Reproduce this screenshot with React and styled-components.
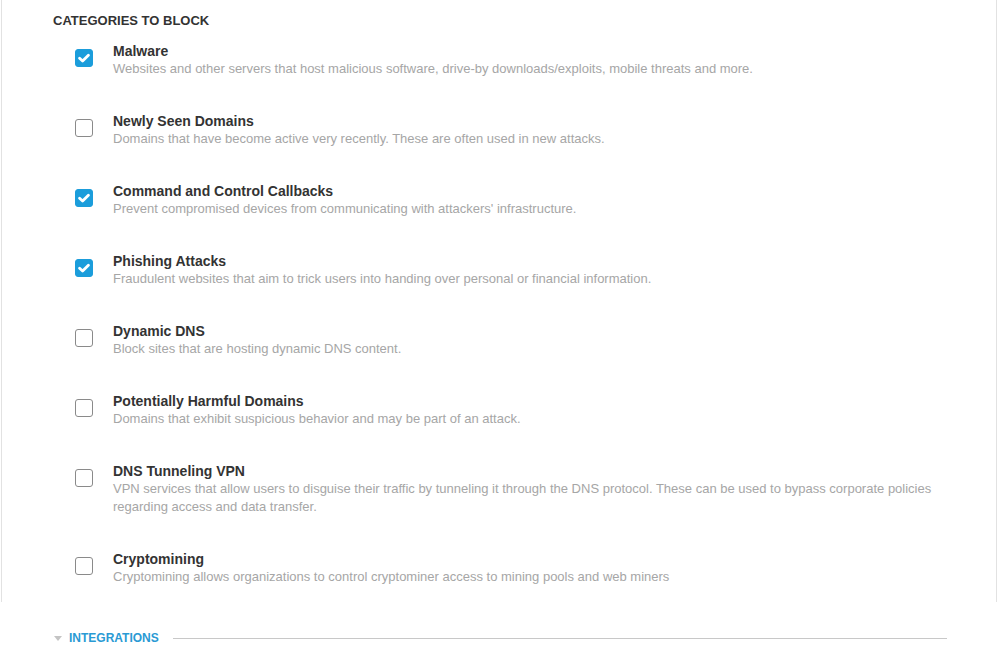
import styled, { createGlobalStyle } from 'styled-components';

const GlobalStyle = createGlobalStyle`
  body {
    margin: 0;
    background: #fff;
    font-family: "Liberation Sans", Arial, Helvetica, sans-serif;
    -webkit-font-smoothing: antialiased;
  }
`;

const categories = [
  { name: 'Malware', checked: true, desc: 'Websites and other servers that host malicious software, drive-by downloads/exploits, mobile threats and more.' },
  { name: 'Newly Seen Domains', checked: false, desc: 'Domains that have become active very recently. These are often used in new attacks.' },
  { name: 'Command and Control Callbacks', checked: true, desc: "Prevent compromised devices from communicating with attackers' infrastructure." },
  { name: 'Phishing Attacks', checked: true, desc: 'Fraudulent websites that aim to trick users into handing over personal or financial information.' },
  { name: 'Dynamic DNS', checked: false, desc: 'Block sites that are hosting dynamic DNS content.' },
  { name: 'Potentially Harmful Domains', checked: false, desc: 'Domains that exhibit suspicious behavior and may be part of an attack.' },
  { name: 'DNS Tunneling VPN', checked: false, desc: 'VPN services that allow users to disguise their traffic by tunneling it through the DNS protocol. These can be used to bypass corporate policies regarding access and data transfer.' },
  { name: 'Cryptomining', checked: false, desc: 'Cryptomining allows organizations to control cryptominer access to mining pools and web miners' },
];

const Panel = styled.section`
  margin: 0 3px 0 1px;
  padding: 13px 0 16px 51px;
  border-left: 1px solid #e2e2e2;
  border-right: 1px solid #e2e2e2;
`;

const Heading = styled.h3`
  margin: 0 0 13px;
  font-size: 13px;
  line-height: 16px;
  font-weight: bold;
  color: #333;
  text-transform: uppercase;
`;

const List = styled.ul`
  list-style: none;
  margin: 0;
  padding: 0;
`;

const Row = styled.li`
  display: flex;
  align-items: flex-start;
  gap: 20px;
  padding-left: 22px;
  margin-bottom: 34px;

  &:last-child {
    margin-bottom: 0;
  }
`;

const Box = styled.span`
  flex: none;
  display: flex;
  align-items: center;
  justify-content: center;
  box-sizing: border-box;
  width: 18px;
  height: 18px;
  margin-top: 7px;
  border-radius: 3px;
  background: ${p => (p.$checked ? '#1b9ddb' : '#fff')};
  border: 1px solid ${p => (p.$checked ? '#1b9ddb' : '#8a8a8a')};
`;

const Text = styled.div`
  width: 860px;
`;

const Name = styled.div`
  font-size: 14px;
  line-height: 18px;
  font-weight: bold;
  color: #333;
`;

const Desc = styled.div`
  font-size: 13px;
  line-height: 18px;
  color: #a6a6a6;
`;

const Section = styled.div`
  display: flex;
  align-items: center;
  margin: 28px 0 0 54px;
  width: 893px;
`;

const Caret = styled.span`
  width: 0;
  height: 0;
  border-left: 4px solid transparent;
  border-right: 4px solid transparent;
  border-top: 5px solid #c4c4c4;
  margin-right: 7px;
`;

const SectionTitle = styled.span`
  font-size: 12px;
  line-height: 16px;
  font-weight: bold;
  color: #2a9ad4;
  text-transform: uppercase;
  margin-right: 14px;
`;

const Rule = styled.span`
  flex: 1;
  height: 1px;
  background: #c8c8c8;
`;

const Check = () => (
  <svg width="12" height="10" viewBox="0 0 12 10">
    <path d="M1.6 5.2 L4.6 8 L10.4 2.2" fill="none" stroke="#fff" strokeWidth="2.8" strokeLinecap="round" strokeLinejoin="round" />
  </svg>
);

export default function App() {
  return (
    <>
      <GlobalStyle />
      <Panel>
        <Heading>Categories to Block</Heading>
        <List>
          {categories.map(c => (
            <Row key={c.name}>
              <Box $checked={c.checked}>{c.checked && <Check />}</Box>
              <Text>
                <Name>{c.name}</Name>
                <Desc>{c.desc}</Desc>
              </Text>
            </Row>
          ))}
        </List>
      </Panel>
      <Section>
        <Caret />
        <SectionTitle>Integrations</SectionTitle>
        <Rule />
      </Section>
    </>
  );
}
